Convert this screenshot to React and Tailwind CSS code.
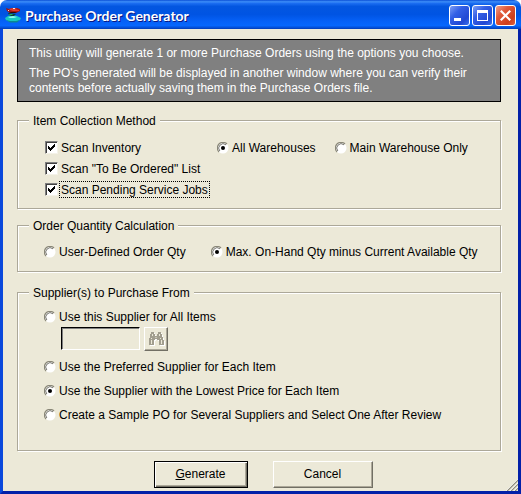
import { useState } from 'react';

function Check({ label, checked, onChange, focused }) {
  return (
    <label className="flex h-[21px] items-center gap-px">
      <span className="relative flex">
        <input
          type="checkbox"
          checked={checked}
          onChange={onChange}
          className="peer size-[13px] appearance-none border border-t-[#808080] border-l-[#808080] border-r-[#f4f2e8] border-b-[#f4f2e8] bg-white shadow-[inset_1px_1px_0_#404040] outline-none"
        />
        <svg viewBox="0 0 13 13" shapeRendering="crispEdges" className="pointer-events-none absolute inset-0 hidden size-[13px] peer-checked:block">
          <path d="M3 5h1v1h1v1h1V6h1V5h1V4h1V3h1v3H9v1H8v1H7v1H6v1H5V9H4V8H3z" fill="#000" />
        </svg>
      </span>
      <span className={`border px-px pt-[2px] leading-[13px] ${focused ? 'border-dotted border-black' : 'border-transparent'}`}>{label}</span>
    </label>
  );
}

function Radio({ name, label, checked, onChange, disabled }) {
  return (
    <label className="flex h-[21px] items-center gap-[3px]">
      <span className="relative flex">
        <input type="radio" name={name} checked={checked} onChange={onChange} disabled={disabled} className="peer size-3 appearance-none rounded-full outline-none" />
        <svg viewBox="0 0 12 12" className="pointer-events-none absolute inset-0 size-3">
          <circle cx="6" cy="6" r="5.5" fill="#fff" />
          <path d="M2 10A5.5 5.5 0 0 1 10 2" fill="none" stroke="#8a8878" strokeWidth="1.2" />
          <path d="M2.8 9A4.4 4.4 0 0 1 9 2.8" fill="none" stroke="#55544c" strokeWidth="0.8" />
        </svg>
        <svg viewBox="0 0 12 12" className="pointer-events-none absolute inset-0 hidden size-3 peer-checked:block">
          <circle cx="6" cy="6" r="2" fill="#000" />
        </svg>
      </span>
      <span className="pt-[2px] leading-[13px]">{label}</span>
    </label>
  );
}

function Group({ title, className, children }) {
  return (
    <fieldset className={`min-w-0 border border-[#aca899] shadow-[1px_1px_0_#fff,inset_1px_1px_0_#fff] ${className}`}>
      <legend className="ml-[11px] bg-[#ece9d8] px-1 pt-[2px] leading-[13px]">{title}</legend>
      <div className="pl-[26px]">{children}</div>
    </fieldset>
  );
}

function AppIcon() {
  return (
    <svg viewBox="0 0 16 16" className="size-4">
      <path d="M0 11l3-2 4-1 5 1 4 2-1 2-4 2H5l-4-2z" fill="#18c9c0" />
      <path d="M3 10l5-1 4 1-3 1H5z" fill="#8df7ea" />
      <path d="M1 13l4 1h6l4-1-3 2.500H5z" fill="#0b8791" />
      <path d="M3 6l8 1-2 2H6L4 8z" fill="#0c3a3c" />
      <path d="M3 7h4l1 1H5z" fill="#1fb25a" />
      <path d="M1 1l3 1 3-1h5l3 1v2l-4 2H5L2 4z" fill="#a01414" />
      <path d="M4 2l4-1h4l-2 1 4 1v1H8L5 3z" fill="#e23a2c" />
      <path d="M4 5h8l-2 1H6z" fill="#2b0808" />
      <path d="M8 1h2v1H8zM3 3h1v1H3z" fill="#f3e0d8" />
    </svg>
  );
}

const captionButtons = [
  { name: 'Minimize', bg: 'bg-[linear-gradient(135deg,#7c9df5_0%,#3460e6_35%,#2148d3_75%,#3a72ee_100%)]', path: 'M4 12h7v3H4z' },
  { name: 'Maximize', bg: 'bg-[linear-gradient(135deg,#7c9df5_0%,#3460e6_35%,#2148d3_75%,#3a72ee_100%)]', path: 'M4 4h11v11H4zM5 7v7h9V7z' },
  { name: 'Close', bg: 'bg-[linear-gradient(135deg,#f0a08a_0%,#e0593a_35%,#cf3f1c_75%,#dd6140_100%)]', path: 'M4 5.500L5.500 4l4 4 4-4L15 5.500l-4 4 4 4-1.500 1.500-4-4-4 4L4 13.500l4-4z' },
];

function TitleBar() {
  return (
    <header className="flex h-[29px] items-center rounded-t-[7px] bg-[linear-gradient(to_bottom,#0a4fd6_0%,#3c8df8_6%,#1a6cf0_12%,#0356e0_22%,#0054e3_50%,#0560f6_72%,#0667fd_88%,#0450d8_95%,#003bb8_100%)] pr-[5px] pl-[5px]">
      <AppIcon />
      <h1 className="flex-1 pt-[3px] pl-1 font-['Lato',sans-serif] text-[14px] leading-5 font-bold text-white [text-shadow:1px_1px_0_#0a1883]">Purchase Order Generator</h1>
      <div className="flex gap-[2px] pt-[2px]">
        {captionButtons.map(b => (
          <button key={b.name} type="button" aria-label={b.name} className={`size-[21px] rounded-[3px] border border-white ${b.bg}`}>
            <svg viewBox="0 0 19 19" className="size-[19px]">
              <path d={b.path} fill="#fff" fillRule="evenodd" />
            </svg>
          </button>
        ))}
      </div>
    </header>
  );
}

function Binoculars() {
  const shape = 'M3 1h3v2h1v2h2V3h1V1h3v2h1v3h1v3h1v5h-5V9H9V8H7v1H6v5H1V9h0V7h1V3h1z';
  return (
    <svg viewBox="0 0 17 17" className="size-[17px]">
      <path d={shape} transform="translate(1 1)" fill="#fff" />
      <path d={shape} fill="#a29e8f" />
      <path d="M4.500 3v2M11.500 3v2M3.500 7v1M3.500 9v4M12.500 7v1M13.500 9v4M8 6v1" stroke="#ece9d8" fill="none" />
    </svg>
  );
}

export default function App() {
  const [scan, setScan] = useState({ inventory: true, toOrder: true, jobs: true });
  const [warehouse, setWarehouse] = useState('all');
  const [qty, setQty] = useState('max');
  const [supplier, setSupplier] = useState('lowest');

  const toggle = key => () => setScan(s => ({ ...s, [key]: !s[key] }));

  return (
    <div className="flex min-h-screen flex-col bg-white font-['Liberation_Sans',Arial,sans-serif] text-[12px] leading-[15px] text-black">
      <TitleBar />
      <main className="relative flex-1 border-x-[3px] border-b-[3px] border-l-[#0a48dc] border-r-[#0320a8] border-b-[#0320a8] bg-[#ece9d8] pt-[10px] pr-[17px] pb-[3px] pl-[14px]">
        <section className="border border-black bg-[#808080] pt-[6px] pr-4 pb-[5px] pl-[11px] text-white">
          <p>This utility will generate 1 or more Purchase Orders using the options you choose.</p>
          <p className="mt-[5px]">The PO's generated will be displayed in another window where you can verify their contents before actually saving them in the Purchase Orders file.</p>
        </section>

        <Group title="Item Collection Method" className="mt-[11px] pt-[9px] pb-2">
          <div className="flex pl-px">
            <div className="w-[172px]">
              <Check label="Scan Inventory" checked={scan.inventory} onChange={toggle('inventory')} />
              <Check label={'Scan "To Be Ordered" List'} checked={scan.toOrder} onChange={toggle('toOrder')} />
              <Check label="Scan Pending Service Jobs" checked={scan.jobs} onChange={toggle('jobs')} focused />
            </div>
            <div className="flex gap-[19px]">
              <Radio name="warehouse" label="All Warehouses" checked={warehouse === 'all'} onChange={() => setWarehouse('all')} />
              <Radio name="warehouse" label="Main Warehouse Only" checked={warehouse === 'main'} onChange={() => setWarehouse('main')} />
            </div>
          </div>
        </Group>

        <Group title="Order Quantity Calculation" className="mt-[9px] pt-2 pb-[9px]">
          <div className="flex gap-[25px]">
            <Radio name="qty" label="User-Defined Order Qty" checked={qty === 'user'} onChange={() => setQty('user')} />
            <Radio name="qty" label="Max. On-Hand Qty minus Current Available Qty" checked={qty === 'max'} onChange={() => setQty('max')} />
          </div>
        </Group>

        <Group title="Supplier(s) to Purchase From" className="mt-[13px] pt-[6px] pb-[25px]">
          <Radio name="supplier" label="Use this Supplier for All Items" checked={supplier === 'this'} onChange={() => setSupplier('this')} />
          <div className="mb-[5px] flex gap-1 pl-[17px]">
            <input
              type="text"
              aria-label="Supplier"
              disabled={supplier !== 'this'}
              className="h-[23px] w-[79px] border border-t-black border-l-black border-r-white border-b-white bg-[#ece9d8] px-1 shadow-[inset_1px_1px_0_#808080]"
            />
            <button
              type="button"
              aria-label="Find supplier"
              disabled={supplier !== 'this'}
              className="flex size-6 items-center justify-center border border-t-white border-l-white border-r-[#716f64] border-b-[#716f64] bg-[#ece9d8] shadow-[inset_-1px_-1px_0_#aca899]"
            >
              <Binoculars />
            </button>
          </div>
          <div className="flex flex-col gap-[3px]">
            <Radio name="supplier" label="Use the Preferred Supplier for Each Item" checked={supplier === 'preferred'} onChange={() => setSupplier('preferred')} />
            <Radio name="supplier" label="Use the Supplier with the Lowest Price for Each Item" checked={supplier === 'lowest'} onChange={() => setSupplier('lowest')} />
            <Radio name="supplier" label="Create a Sample PO for Several Suppliers and Select One After Review" checked={supplier === 'sample'} onChange={() => setSupplier('sample')} />
          </div>
        </Group>

        <div className="mt-[10px] flex justify-center gap-[25px] pl-2">
          <button type="submit" className="h-[27px] w-[94px] border border-black bg-[#ece9d8] shadow-[inset_1px_1px_0_#fff,inset_-1px_-1px_0_#716f64,inset_-2px_-2px_0_#aca899]">
            <span className="underline">G</span>enerate
          </button>
          <button type="button" className="h-[27px] w-[100px] border border-t-white border-l-white border-r-[#716f64] border-b-[#716f64] bg-[#ece9d8] shadow-[inset_-1px_-1px_0_#aca899]">
            Cancel
          </button>
        </div>

        <svg viewBox="0 0 12 12" className="absolute right-0 bottom-0 size-3">
          <path d="M1 12L12 1M5 12l7-7M9 12l3-3" stroke="#8f8c7e" strokeWidth="1.4" />
          <path d="M0 12L12 0M4 12l8-8M8 12l4-4" stroke="#fff" strokeWidth="0.7" />
        </svg>
      </main>
    </div>
  );
}
